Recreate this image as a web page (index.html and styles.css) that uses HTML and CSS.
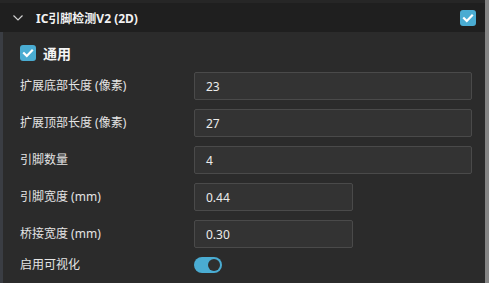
FILE: index.html
```html
<!DOCTYPE html>
<html lang="zh">
<head>
<meta charset="utf-8">
<link rel="stylesheet" href="styles.css">
</head>
<body>
<div class="window">
  <div class="panel">
    <div class="topline"></div>
    <div class="header">
      <svg class="chevron" width="10" height="6" viewBox="0 0 10 6"><path d="M0.5 0.5 L5 5 L9.5 0.5" fill="none" stroke="#d0d0d0" stroke-width="1.2"/></svg>
      <span class="title">IC引脚检测V2 (2D)</span>
      <span class="check">
        <svg width="16" height="16" viewBox="0 0 16 16"><path d="M4 8.2 L6.8 11 L12 5.6" fill="none" stroke="#fff" stroke-width="2.2" stroke-linecap="square"/></svg>
      </span>
    </div>
    <div class="body">
      <div class="section">
        <span class="check">
          <svg width="16" height="16" viewBox="0 0 16 16"><path d="M4 8.2 L6.8 11 L12 5.6" fill="none" stroke="#fff" stroke-width="2.2" stroke-linecap="square"/></svg>
        </span>
        <span class="section-title">通用</span>
      </div>
      <div class="form">
        <div class="row"><span class="label">扩展底部长度 (像素)</span><div class="input">23</div></div>
        <div class="row"><span class="label">扩展顶部长度 (像素)</span><div class="input">27</div></div>
        <div class="row"><span class="label">引脚数量</span><div class="input">4</div></div>
        <div class="row"><span class="label">引脚宽度 (mm)</span><div class="input short">0.44</div></div>
        <div class="row"><span class="label">桥接宽度 (mm)</span><div class="input short">0.30</div></div>
        <div class="row small"><span class="label">启用可视化</span><span class="toggle"><span class="knob"></span></span></div>
      </div>
    </div>
  </div>
  <div class="scrollbar"></div>
</div>
</body>
</html>
```

FILE: styles.css
```css
html, body {
  margin: 0;
  padding: 0;
  background: #2b2b2b;
  overflow: hidden;
}
body {
  font-family: "Noto Sans", "Noto Sans CJK SC", sans-serif;
  color: #e6e6e6;
  font-size: 12px;
}
.window {
  display: flex;
  width: 489px;
  height: 283px;
}
.panel {
  width: 485px;
  display: flex;
  flex-direction: column;
}
.scrollbar {
  width: 4px;
  background: #858585;
}
.topline {
  height: 3px;
  background: #262626;
}
.header {
  height: 29px;
  background: #1f1f1f;
  display: flex;
  align-items: center;
  padding-left: 13px;
  padding-right: 9px;
}
.chevron {
  display: block;
  margin-top: 1px;
}
.title {
  margin-left: 13px;
  font-weight: bold;
  color: #f2f2f2;
  font-size: 12px;
  flex: 1;
}
.check {
  width: 16px;
  height: 16px;
  border-radius: 3px;
  background: #4aacd2;
  display: block;
  flex: none;
}
.check svg {
  display: block;
}
.body {
  flex: 1;
  border-left: 3px solid #3a3d43;
  padding-left: 17px;
  padding-right: 13px;
}
.section {
  display: flex;
  align-items: center;
  margin-top: 13px;
  height: 16px;
}
.section-title {
  margin-left: 7px;
  font-weight: bold;
  font-size: 14px;
  color: #f4f4f4;
}
.form {
  margin-top: 11px;
  display: flex;
  flex-direction: column;
  gap: 9px;
}
.row {
  display: grid;
  grid-template-columns: 174px 1fr;
  align-items: center;
  height: 28px;
}
.row.small {
  height: 16px;
}
.label {
  color: #e4e4e4;
  font-size: 12px;
  line-height: 16px;
}
.input {
  box-sizing: border-box;
  height: 28px;
  background: #333333;
  border: 1px solid #4a4a4a;
  border-radius: 2px;
  padding-left: 11px;
  display: flex;
  align-items: center;
  color: #ececec;
  font-size: 12px;
}
.input.short {
  width: 159px;
}
.toggle {
  width: 28px;
  height: 16px;
  border-radius: 8px;
  background: #4aacd2;
  display: flex;
  align-items: center;
  justify-content: flex-end;
  padding-right: 2px;
  box-sizing: border-box;
}
.knob {
  width: 12px;
  height: 12px;
  border-radius: 50%;
  background: #2f2f2f;
}
```
